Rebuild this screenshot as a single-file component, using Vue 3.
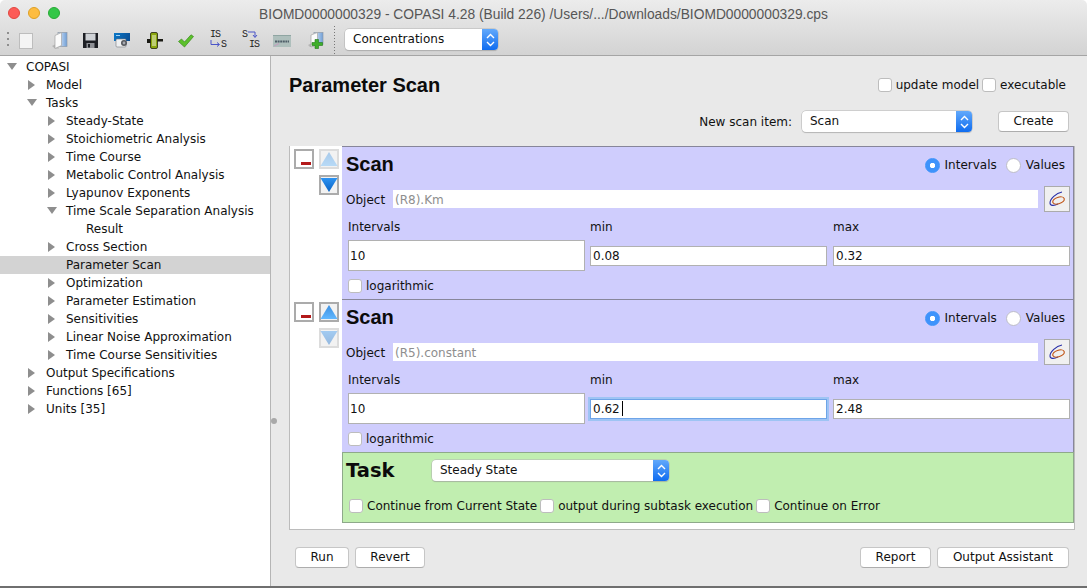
<template>
  <div class="window">
    <header class="chrome">
      <div class="titlebar">
        <div class="lights">
          <span class="light red"></span>
          <span class="light yellow"></span>
          <span class="light green"></span>
        </div>
        <div class="title">BIOMD0000000329 - COPASI 4.28 (Build 226) /Users/.../Downloads/BIOMD0000000329.cps</div>
      </div>
      <div class="toolbar">
        <div class="grip"></div>
        <div class="tool t-doc"><svg width="14" height="16" viewBox="0 0 14 16"><rect x="0.5" y="0.5" width="13" height="15" fill="#f4f4f4" stroke="#bdbdbd"/></svg></div>
        <div class="tool t-open">
          <svg width="16" height="17" viewBox="0 0 16 17">
            <defs>
              <linearGradient id="door" x1="0" y1="0" x2="1" y2="0"><stop offset="0" stop-color="#dfe9f6"/><stop offset="1" stop-color="#6f9fd8"/></linearGradient>
            </defs>
            <path d="M0 14 L4 12 L7 16.5 L3 16.5 Z" fill="#b4b4b4"/>
            <rect x="6" y="0.5" width="9" height="14" fill="url(#door)" stroke="#8f9aa8" stroke-width="0.7"/>
            <path d="M3 3.5 L9.5 0.5 L9.5 13.5 L3 16.5 Z" fill="#fbfbfb" stroke="#a5a5a5" stroke-width="0.7"/>
          </svg>
        </div>
        <div class="tool t-save">
          <svg width="15" height="15" viewBox="0 0 15 15">
            <path d="M0 0 H15 V15 H0 Z" fill="#1d1f24"/>
            <rect x="2.5" y="0.5" width="10" height="7" fill="#cfd2d6"/>
            <rect x="3.5" y="10" width="8" height="5" fill="#8e9095"/>
            <rect x="5" y="11" width="2" height="3.5" fill="#1d1f24"/>
          </svg>
        </div>
        <div class="tool t-cam">
          <svg width="16" height="16" viewBox="0 0 16 16">
            <defs>
              <linearGradient id="cam" x1="0" y1="0" x2="1" y2="0.4"><stop offset="0" stop-color="#0b78c8"/><stop offset="1" stop-color="#0a4f96"/></linearGradient>
            </defs>
            <rect x="0" y="0" width="16" height="15" fill="url(#cam)"/>
            <rect x="0" y="8" width="16" height="7" fill="#d8dade"/>
            <rect x="2" y="6" width="10" height="8" rx="1" fill="#eef0f2" stroke="#777" stroke-width="0.6"/>
            <circle cx="10" cy="10" r="3" fill="#55585e"/>
            <circle cx="10" cy="10" r="1.4" fill="#a8abb2"/>
            <rect x="2" y="2" width="4" height="1" fill="#9fd3f5"/>
          </svg>
        </div>
        <div class="tool t-bar">
          <svg width="16" height="17" viewBox="0 0 16 17">
            <path d="M0 7 H16 V9.5 H10 V11 H0 Z" fill="#1a1a14"/>
            <rect x="3.5" y="0.5" width="7" height="16" rx="1.5" fill="#8aa60e" stroke="#23260c" stroke-width="0.8"/>
            <rect x="5.5" y="3" width="1" height="11" fill="#f2f5d5"/>
            <rect x="7.5" y="3" width="1" height="11" fill="#f2f5d5"/>
          </svg>
        </div>
        <div class="tool t-check">
          <svg width="16" height="14" viewBox="0 0 16 14">
            <path d="M0.5 7.5 L3.5 5 L6.5 8 L13 0.8 L15.5 2.5 L6.5 13 Z" fill="#5cc02c" stroke="#3b8b1d" stroke-width="0.7"/>
          </svg>
        </div>
        <div class="tool t-is">
          <span class="mono a">IS</span>
          <svg class="is-arrow" width="11" height="8" viewBox="0 0 11 8"><path d="M1 0 V4.5 H9 M7 2.5 L9.5 4.5 L7 6.5" fill="none" stroke="#4a55c8"/></svg>
          <span class="mono b">S</span>
        </div>
        <div class="tool t-si">
          <span class="mono c">S</span>
          <svg class="si-arrow" width="10" height="8" viewBox="0 0 10 8"><path d="M0 1 H7 V6 M5 4 L7 6.5 L9 4" fill="none" stroke="#4a55c8"/></svg>
          <span class="mono d">IS</span>
        </div>
        <div class="tool t-pic">
          <svg width="18" height="12" viewBox="0 0 18 12">
            <rect width="18" height="12" fill="#aebfbc"/>
            <rect width="18" height="1" fill="#8fa5a2"/>
            <path d="M1 11 L6 8.5" stroke="#c79cc0" fill="none"/>
            <path d="M2 6.5 H16" stroke="#4f5f69" stroke-width="2" stroke-dasharray="2 0.6" fill="none"/>
          </svg>
        </div>
        <div class="tool t-add">
          <svg width="16" height="17" viewBox="0 0 16 17">
            <defs>
              <linearGradient id="door2" x1="0" y1="0" x2="1" y2="0"><stop offset="0" stop-color="#dfe9f6"/><stop offset="1" stop-color="#6f9fd8"/></linearGradient>
            </defs>
            <path d="M0 13 L4 11 L6 15 L2 15 Z" fill="#b4b4b4"/>
            <rect x="6" y="0.5" width="9" height="12" fill="url(#door2)" stroke="#8f9aa8" stroke-width="0.7"/>
            <path d="M3 3 L9.5 0.5 L9.5 12 L3 15 Z" fill="#fbfbfb" stroke="#a5a5a5" stroke-width="0.7"/>
            <path d="M7 7.5 H10.5 V10.5 H14.5 V13.5 H10.5 V16.5 H7 V13.5 H4 V10.5 H7 Z" fill="#3fae2a" stroke="#23791a" stroke-width="0.6"/>
          </svg>
        </div>
        <div class="tool-sep"></div>
        <div class="combo combo-main">
          <span>Concentrations</span>
          <span class="stepper"><svg width="9" height="14" viewBox="0 0 9 14"><path d="M1 5 L4.5 1.5 L8 5 M1 9 L4.5 12.5 L8 9" fill="none" stroke="#fff" stroke-width="1.4"/></svg></span>
        </div>
      </div>
    </header>

    <div class="body">
      <aside class="tree">
        <div
          v-for="node in tree"
          :key="node.label"
          class="tree-row"
          :class="['level-' + node.level, { selected: node.selected }]"
        >
          <span class="arrow" :class="node.arrow"></span>
          <span>{{ node.label }}</span>
        </div>
      </aside>

      <main class="panel">
        <span class="split-dot"></span>
        <div class="head-row">
          <h1>Parameter Scan</h1>
          <div class="head-checks">
            <label class="check gap-tight"><span class="box"></span>update model</label>
            <label class="check"><span class="box"></span>executable</label>
          </div>
        </div>

        <div class="new-row">
          <span class="new-label">New scan item:</span>
          <div class="combo combo-new">
            <span>Scan</span>
            <span class="stepper"><svg width="9" height="14" viewBox="0 0 9 14"><path d="M1 5 L4.5 1.5 L8 5 M1 9 L4.5 12.5 L8 9" fill="none" stroke="#fff" stroke-width="1.4"/></svg></span>
          </div>
          <button class="btn btn-create">Create</button>
        </div>

        <div class="frame">
          <div v-for="item in scans" :key="item.object" class="scan-row">
            <div class="side">
              <div class="side-col">
                <button class="side-btn minus"><span class="page"><span class="bar"></span></span></button>
              </div>
              <div class="side-col">
                <button class="side-btn" :class="{ faded: !item.upActive }">
                  <svg width="18" height="16" viewBox="0 0 18 16"><defs><linearGradient :id="'up' + item.id" x1="0" y1="0" x2="0" y2="1"><stop offset="0" stop-color="#3c8fe0"/><stop offset="1" stop-color="#62b8ff"/></linearGradient></defs><path d="M9 1 L17.5 15 H0.5 Z" :fill="'url(#up' + item.id + ')'"/></svg>
                </button>
                <button class="side-btn down" :class="{ faded: !item.downActive }">
                  <svg width="18" height="16" viewBox="0 0 18 16"><defs><linearGradient :id="'dn' + item.id" x1="0" y1="0" x2="0" y2="1"><stop offset="0" stop-color="#2d93f2"/><stop offset="1" stop-color="#0a63c4"/></linearGradient></defs><path d="M0.5 1 H17.5 L9 15 Z" :fill="'url(#dn' + item.id + ')'"/></svg>
                </button>
              </div>
            </div>
            <section class="scan">
              <div class="scan-top">
                <h2>Scan</h2>
                <div class="radios">
                  <label class="radio"><span class="dot on"></span>Intervals</label>
                  <label class="radio"><span class="dot"></span>Values</label>
                </div>
              </div>
              <div class="object-row">
                <span class="object-label">Object</span>
                <div class="object-field">{{ item.object }}</div>
                <button class="object-btn">
                  <svg width="20" height="18" viewBox="0 0 20 18">
                    <path d="M15 2 C9 3 3 9 3 13 C3 16 7 16 11 14" fill="none" stroke="#2a2fa8" stroke-width="1.1"/>
                    <ellipse cx="11.5" cy="10.5" rx="6" ry="3.2" transform="rotate(-18 11.5 10.5)" fill="none" stroke="#c2571a" stroke-width="1.2"/>
                  </svg>
                </button>
              </div>
              <div class="values">
                <span class="val-label">Intervals</span>
                <span class="val-label">min</span>
                <span class="val-label">max</span>
                <div class="field tall">{{ item.intervals }}</div>
                <div class="field min-field" :class="{ focused: item.focusMin }">{{ item.min }}<span v-if="item.focusMin" class="caret"></span></div>
                <div class="field">{{ item.max }}</div>
              </div>
              <label class="check log"><span class="box"></span>logarithmic</label>
            </section>
          </div>

          <div class="scan-row">
            <div class="side"></div>
            <section class="task">
              <div class="task-top">
                <h2>Task</h2>
                <div class="combo combo-task">
                  <span>Steady State</span>
                  <span class="stepper"><svg width="9" height="14" viewBox="0 0 9 14"><path d="M1 5 L4.5 1.5 L8 5 M1 9 L4.5 12.5 L8 9" fill="none" stroke="#fff" stroke-width="1.4"/></svg></span>
                </div>
              </div>
              <div class="task-checks">
                <label class="check gap-tight"><span class="box"></span>Continue from Current State</label>
                <label class="check gap-tight"><span class="box"></span>output during subtask execution</label>
                <label class="check"><span class="box"></span>Continue on Error</label>
              </div>
            </section>
          </div>
        </div>

        <div class="actions">
          <button class="btn btn-run">Run</button>
          <button class="btn btn-revert">Revert</button>
          <span class="spacer"></span>
          <button class="btn btn-report">Report</button>
          <button class="btn btn-output">Output Assistant</button>
        </div>
      </main>
    </div>
  </div>
</template>

<script setup>
const tree = [
  { label: 'COPASI', level: 0, arrow: 'open' },
  { label: 'Model', level: 1, arrow: 'closed' },
  { label: 'Tasks', level: 1, arrow: 'open' },
  { label: 'Steady-State', level: 2, arrow: 'closed' },
  { label: 'Stoichiometric Analysis', level: 2, arrow: 'closed' },
  { label: 'Time Course', level: 2, arrow: 'closed' },
  { label: 'Metabolic Control Analysis', level: 2, arrow: 'closed' },
  { label: 'Lyapunov Exponents', level: 2, arrow: 'closed' },
  { label: 'Time Scale Separation Analysis', level: 2, arrow: 'open' },
  { label: 'Result', level: 3, arrow: '' },
  { label: 'Cross Section', level: 2, arrow: 'closed' },
  { label: 'Parameter Scan', level: 2, arrow: '', selected: true },
  { label: 'Optimization', level: 2, arrow: 'closed' },
  { label: 'Parameter Estimation', level: 2, arrow: 'closed' },
  { label: 'Sensitivities', level: 2, arrow: 'closed' },
  { label: 'Linear Noise Approximation', level: 2, arrow: 'closed' },
  { label: 'Time Course Sensitivities', level: 2, arrow: 'closed' },
  { label: 'Output Specifications', level: 1, arrow: 'closed' },
  { label: 'Functions [65]', level: 1, arrow: 'closed' },
  { label: 'Units [35]', level: 1, arrow: 'closed' }
]

const scans = [
  { id: 1, object: '(R8).Km', intervals: '10', min: '0.08', max: '0.32', upActive: false, downActive: true },
  { id: 2, object: '(R5).constant', intervals: '10', min: '0.62', max: '2.48', upActive: true, downActive: false, focusMin: true }
]
</script>

<style>
html, body {
  margin: 0;
  background: #fff;
}
</style>

<style scoped>
* {
  box-sizing: border-box;
}

.window {
  width: 1087px;
  height: 588px;
  display: flex;
  flex-direction: column;
  font-family: "DejaVu Sans", sans-serif;
  font-size: 12px;
  color: #111;
  overflow: hidden;
  border-bottom: 2px solid #6f6f6f;
}

.chrome {
  height: 56px;
  flex: none;
  background: linear-gradient(#ececec, #d3d3d3);
  border-bottom: 1px solid #a5a5a5;
  border-radius: 5px 5px 0 0;
}

.titlebar {
  height: 26px;
  position: relative;
  display: flex;
  align-items: center;
  justify-content: center;
}

.lights {
  position: absolute;
  left: 8px;
  top: 7px;
  display: flex;
  gap: 8px;
}

.light {
  width: 12px;
  height: 12px;
  border-radius: 50%;
}

.red { background: #fc5b57; border: 1px solid #e2463f; }
.yellow { background: #fdbc40; border: 1px solid #dfa023; }
.green { background: #33c748; border: 1px solid #27aa35; }

.title {
  font-family: "Liberation Sans", sans-serif;
  font-size: 13.8px;
  color: #565656;
  margin-top: 2px;
}

.toolbar {
  height: 29px;
  padding-bottom: 2px;
  display: flex;
  align-items: center;
  position: relative;
}

.grip {
  width: 2px;
  height: 16px;
  margin-left: 7px;
  margin-right: 10px;
  background: repeating-linear-gradient(#8e8e8e 0 2px, transparent 2px 6px);
}

.tool {
  width: 32px;
  height: 20px;
  margin-top: 2px;
  flex: none;
  display: flex;
  align-items: center;
  justify-content: flex-start;
  position: relative;
}

.t-doc { width: 33px; }
.t-open { width: 31px; }
.t-save { width: 31px; }
.t-cam { width: 33px; }
.t-bar { width: 31px; }
.t-check { width: 32px; }
.t-is { width: 32px; }
.t-si { width: 31px; }
.t-pic { width: 35px; }
.t-add { width: 26px; }

.mono {
  position: absolute;
  font-family: "Liberation Mono", monospace;
  font-size: 10px;
  letter-spacing: -1px;
  line-height: 8px;
  color: #222;
}

.t-is .a { left: 0; top: 0; }
.t-is .b { left: 11px; top: 10px; }
.is-arrow { position: absolute; left: 0; top: 9px; }
.t-si .c { left: 0; top: 0; }
.t-si .d { left: 7px; top: 10px; }
.si-arrow { position: absolute; left: 6px; top: 0; }

.tool-sep {
  width: 1px;
  height: 28px;
  margin-right: 10px;
  background: repeating-linear-gradient(#777 0 1px, transparent 1px 3px);
}

.combo {
  height: 21px;
  display: flex;
  align-items: center;
  justify-content: space-between;
  background: #fff;
  border-radius: 4px;
  box-shadow: 0 0 0 0.5px #b4b4b4, 0 1px 1px rgba(0, 0, 0, 0.2);
  font-size: 12px;
  color: #111;
  overflow: hidden;
}

.combo > span:first-child {
  padding-left: 8px;
  padding-bottom: 2px;
}

.stepper {
  width: 16px;
  height: 100%;
  display: flex;
  align-items: center;
  justify-content: center;
  background: linear-gradient(#62a9fb, #0f6cf0);
}

.combo-main { width: 153px; }
.combo-new { width: 170px; margin-left: 10px; }
.combo-task { width: 237px; }

.body {
  flex: 1;
  display: flex;
  min-height: 0;
}

.tree {
  width: 271px;
  flex: none;
  background: #fff;
  border-right: 1px solid #b5b5b5;
  padding-top: 2px;
}

.tree-row {
  height: 18px;
  display: flex;
  align-items: center;
  white-space: nowrap;
}

.level-0 { padding-left: 6px; }
.level-1 { padding-left: 26px; }
.level-2 { padding-left: 46px; }
.level-3 { padding-left: 66px; }

.tree-row.selected {
  background: #d3d3d3;
}

.arrow {
  width: 20px;
  height: 10px;
  flex: none;
  position: relative;
}

.arrow.closed::before {
  content: "";
  position: absolute;
  left: 2px;
  top: 0;
  border-left: 7px solid #8e8e8e;
  border-top: 5px solid transparent;
  border-bottom: 5px solid transparent;
}

.arrow.open::before {
  content: "";
  position: absolute;
  left: 1px;
  top: 1px;
  border-top: 7px solid #8e8e8e;
  border-left: 5px solid transparent;
  border-right: 5px solid transparent;
}

.panel {
  flex: 1;
  background: #e9e9e9;
  padding: 0 12px 0 18px;
  position: relative;
  display: flex;
  flex-direction: column;
}

.split-dot {
  position: absolute;
  left: 0;
  top: 362px;
  width: 6px;
  height: 6px;
  border-radius: 50%;
  background: #a9a9a9;
}

.head-row {
  height: 50px;
  padding-top: 8px;
  padding-right: 9px;
  display: flex;
  align-items: center;
  justify-content: space-between;
}

h1 {
  margin: 0;
  font-family: "Liberation Sans", sans-serif;
  font-size: 20px;
  font-weight: 700;
  color: #0b0b0b;
}

.head-checks {
  display: flex;
}

.check {
  display: flex;
  align-items: center;
  white-space: nowrap;
}

.box {
  width: 14px;
  height: 14px;
  flex: none;
  margin-right: 4px;
  background: #fff;
  border: 1px solid #bdbdbd;
  border-radius: 3px;
}

.gap-tight {
  margin-right: 3px;
}

.new-row {
  height: 21px;
  margin-top: 5px;
  padding-right: 6px;
  display: flex;
  align-items: center;
  justify-content: flex-end;
}

.btn {
  height: 21px;
  padding: 0 0 1px;
  background: #fff;
  border: 1px solid #c6c6c6;
  border-bottom-color: #adadad;
  border-radius: 4px;
  font-family: inherit;
  font-size: 12px;
  color: #111;
}

.btn-create { width: 71px; margin-left: 26px; }

.frame {
  margin-top: 14px;
  width: 786px;
  height: 384px;
  background: #fff;
  border: 1px solid #bcbcbc;
  border-top: 0;
}

.scan-row {
  display: flex;
}

.side {
  width: 52px;
  flex: none;
  padding: 3px 0 0 4px;
  display: flex;
  gap: 5px;
}

.side-col {
  display: flex;
  flex-direction: column;
  gap: 6px;
}

.side-btn {
  width: 20px;
  height: 20px;
  padding: 0;
  background: #f2f2f2;
  border: 2px solid #ababab;
  display: flex;
  align-items: center;
  justify-content: center;
}

.side-btn svg {
  flex: none;
}

.side-btn.faded {
  border-color: #dcdcdc;
}

.side-btn.faded svg {
  opacity: 0.4;
}

.page {
  width: 16px;
  height: 16px;
  background: #fff;
  position: relative;
  display: block;
}

.bar {
  position: absolute;
  right: 1px;
  bottom: 2px;
  width: 10px;
  height: 3px;
  background: #b3191a;
}

.scan {
  width: 732px;
  height: 153px;
  flex: none;
  background: #cfcdfd;
  border-top: 1px solid #87869a;
  border-right: 1px solid #87869a;
  padding-left: 4px;
  padding-right: 3px;
}

.scan-top {
  height: 36px;
  padding-bottom: 1px;
  display: flex;
  align-items: center;
  justify-content: space-between;
}

h2 {
  margin: 0;
  font-family: "Liberation Sans", sans-serif;
  font-size: 20px;
  font-weight: 700;
  color: #0b0b0b;
}

.radios {
  display: flex;
  gap: 9px;
  padding-right: 5px;
  margin-top: 1px;
}

.radio {
  display: flex;
  align-items: center;
}

.dot {
  width: 15px;
  height: 15px;
  margin-right: 5px;
  border-radius: 50%;
  background: #fff;
  border: 1px solid #bdbdc8;
}

.dot.on {
  background: radial-gradient(circle, #fff 0 2.4px, #3e93fb 3px);
  border-color: #3e93fb;
}

.object-row {
  height: 26px;
  margin-top: 3px;
  display: flex;
  align-items: center;
}

.object-label {
  width: 47px;
  flex: none;
  padding-top: 2px;
}

.object-field {
  flex: 1;
  height: 18px;
  padding: 1px 0 0 2px;
  line-height: 18px;
  background: #fff;
  color: #8e8e8e;
}

.object-btn {
  width: 26px;
  height: 26px;
  margin-left: 6px;
  padding: 0;
  flex: none;
  background: #f0f0f0;
  border: 1px solid #ababab;
  display: flex;
  align-items: center;
  justify-content: center;
}

.values {
  margin: 5px 0 0 2px;
  display: grid;
  grid-template-columns: 237px 238px 237px;
  grid-template-rows: 18px 31px;
  column-gap: 5px;
  row-gap: 5px;
  align-items: center;
}

.val-label {
  line-height: 18px;
  margin-top: 2px;
}

.field {
  height: 20px;
  line-height: 18px;
  padding-left: 2px;
  background: #fff;
  border: 1px solid #b1b1b1;
  display: flex;
  align-items: center;
}

.field.tall {
  height: 31px;
  padding: 1px 0 0 1px;
}

.min-field {
  margin-right: 1px;
}

.field.focused {
  border-color: #6ea4e8;
  box-shadow: 0 0 0 2px #9ec4f4;
}

.caret {
  width: 1px;
  height: 15px;
  margin-left: 2px;
  background: #000;
}

.log {
  height: 18px;
  margin: 6px 0 0 2px;
}

.task {
  width: 732px;
  height: 71px;
  flex: none;
  background: #c1eeb0;
  border: 1px solid #8ea98a;
  padding-left: 3px;
}

.task-top {
  height: 35px;
  display: flex;
  align-items: center;
}

.task h2 {
  width: 86px;
  flex: none;
  font-family: "DejaVu Sans", sans-serif;
  font-size: 19.5px;
}

.task-checks {
  margin-top: 11px;
  margin-left: 3px;
  display: flex;
}

.actions {
  margin-top: 17px;
  padding: 0 6px;
  display: flex;
  gap: 6px;
}

.spacer {
  flex: 1;
}

.btn-run { width: 54px; }
.btn-revert { width: 70px; }
.btn-report { width: 71px; }
.btn-output { width: 132px; }
</style>
